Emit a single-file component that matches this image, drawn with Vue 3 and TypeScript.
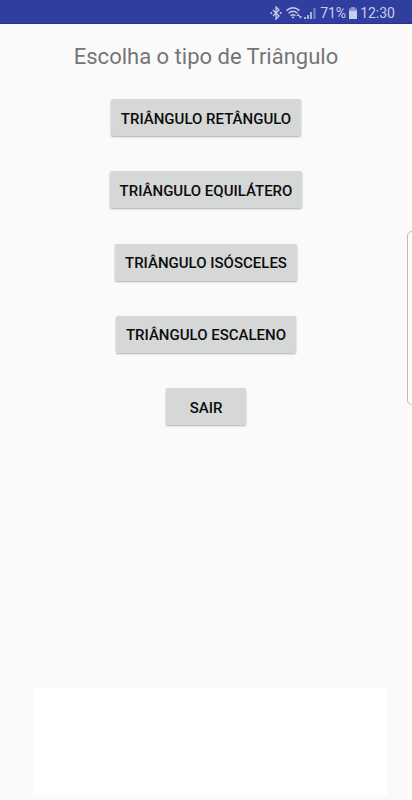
<script setup lang="ts">
interface Choice {
  id: string
  label: string
}

const choices: Choice[] = [
  { id: 'retangulo', label: 'Triângulo Retângulo' },
  { id: 'equilatero', label: 'Triângulo Equilátero' },
  { id: 'isosceles', label: 'Triângulo Isósceles' },
  { id: 'escaleno', label: 'Triângulo Escaleno' },
  { id: 'sair', label: 'Sair' },
]
</script>

<template>
  <div class="screen">
    <header class="status">
      <svg class="bluetooth" viewBox="0 0 12 14" aria-hidden="true">
        <path d="M3 4l6 6-3 3V1l3 3-6 6" fill="none" stroke="currentColor" stroke-width="1.3" />
        <circle cx="1.4" cy="7" r="1" fill="currentColor" />
        <circle cx="10.6" cy="7" r="1" fill="currentColor" />
      </svg>
      <svg class="wifi" viewBox="0 0 17 14" aria-hidden="true">
        <path d="M.5 4.600q6.500-5.500 13 0M2.500 7.200q4.500-3.800 9 0M4.600 9.700q2.400-2 4.800 0" fill="none" stroke="currentColor" stroke-width="1.4" />
        <path d="M5.400 10.800h3.200L7 12.800z" fill="currentColor" />
        <path d="M10.500 9.900L12.200 7.600 13.900 9.900zM12.600 10.300h3.600L14.400 12.600z" fill="currentColor" />
      </svg>
      <svg class="signal" viewBox="0 0 12 14" aria-hidden="true">
        <path d="M0 11h2v2H0zM3 9h2v4H3zM6 6h2v7H6z" fill="currentColor" opacity=".8" />
        <path d="M9.500 2h2v11h-2z" fill="currentColor" opacity=".5" />
      </svg>
      <span class="percent">71%</span>
      <svg class="battery" viewBox="0 0 8 14" aria-hidden="true">
        <path d="M2 1h4v1.500h2V5H0V2.500h2z" fill="currentColor" opacity=".6" />
        <path d="M0 5h8v8H0z" fill="currentColor" />
      </svg>
      <time>12:30</time>
    </header>

    <main class="content">
      <h1>Escolha o tipo de Triângulo</h1>
      <nav class="choices">
        <button v-for="choice in choices" :key="choice.id" type="button">{{ choice.label }}</button>
      </nav>
    </main>

    <aside class="banner"></aside>
    <div class="edge-handle"></div>
  </div>
</template>

<style>
body {
  background: #fafafa;
}
</style>

<style scoped>
.screen {
  position: relative;
  display: flex;
  flex-direction: column;
  min-height: 100vh;
  overflow: hidden;
  font-family: Roboto, "Liberation Sans", sans-serif;
  background: #fafafa;
}

.status {
  display: flex;
  align-items: center;
  justify-content: flex-end;
  height: 24px;
  box-sizing: border-box;
  padding: 2px 17px 0 0;
  border-bottom: 1px solid #26348f;
  background: #303f9f;
  color: #c9cdec;
  font-size: 14px;
  line-height: 22px;
}

.status svg {
  height: 14px;
}

.bluetooth {
  width: 12px;
  margin-right: 4px;
}

.wifi {
  width: 17px;
  margin-right: 1px;
}

.signal {
  width: 12px;
  margin-right: 4px;
}

.battery {
  width: 8px;
  margin: 0 3px 0 3px;
}

.content {
  flex: 1;
  display: flex;
  flex-direction: column;
  align-items: center;
  padding-top: 17px;
}

h1 {
  margin: 0;
  color: #757575;
  font-size: 22px;
  font-weight: 400;
  line-height: 32px;
}

.choices {
  display: flex;
  flex-direction: column;
  align-items: center;
  justify-content: space-between;
  min-height: 326px;
  margin-top: 26px;
}

button {
  min-width: 80px;
  height: 37px;
  padding: 2px 10px 0;
  border: 0;
  border-radius: 2px;
  background: #d6d7d7;
  box-shadow: 0 1px 2px rgba(0, 0, 0, 0.3);
  color: #0c0c0c;
  font-family: inherit;
  font-size: 15px;
  font-weight: 500;
  line-height: 24px;
  text-transform: uppercase;
  white-space: nowrap;
}

.banner {
  height: 107px;
  margin: 0 25px 5px 33px;
  background: #fff;
}

.edge-handle {
  position: absolute;
  top: 231px;
  right: -5px;
  width: 8px;
  height: 172px;
  border: 1px solid #bcbcbc;
  border-radius: 5px;
  background: #fcfcfc;
}
</style>
